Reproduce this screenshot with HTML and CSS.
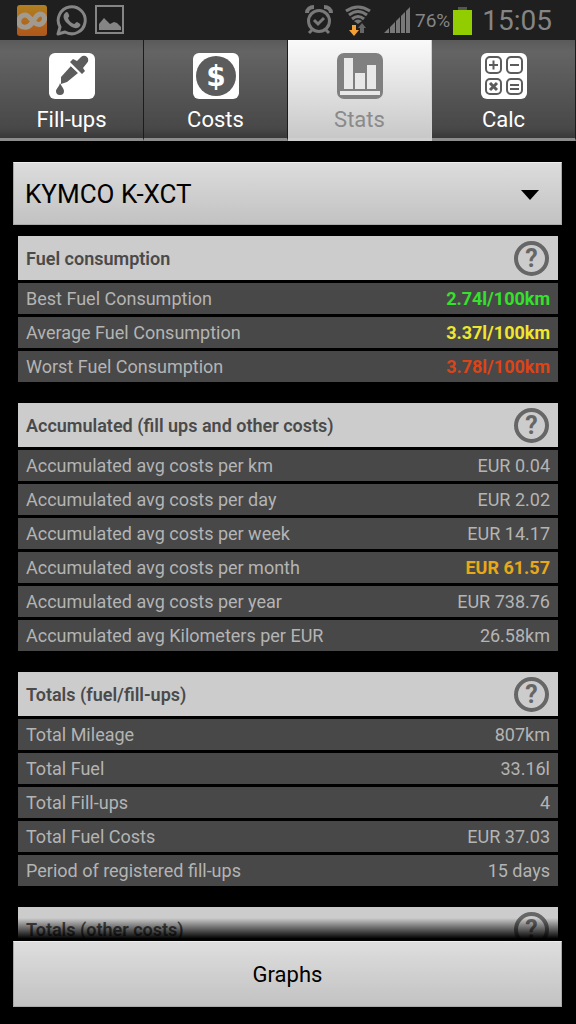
FILE: index.html
```html
<!DOCTYPE html>
<html lang="en">

<head>
    <meta charset="UTF-8">
    <meta name="viewport" content="width=device-width, initial-scale=1.0">
    <title>Stats</title>
    <link rel="stylesheet" href="styles.css">
</head>

<body>
    <!-- status bar -->
    <div class="status">
        <div class="notices">
            <svg width="30" height="31" viewBox="0 0 30 31">
                <defs>
                    <linearGradient id="orange" x1="0" y1="0" x2="0" y2="1">
                        <stop offset="0" stop-color="#b08020" />
                        <stop offset="1" stop-color="#b0561c" />
                    </linearGradient>
                </defs>
                <rect width="30" height="31" rx="3" fill="url(#orange)" />
                <path d="M2 18c1 5 9 6 13 0 4-7 7-11 11-8 4 4-1 11-6 9-5-1-7-9-12-9-4 0-7 4-6 8z" fill="none" stroke="#a09a90" stroke-width="5" />
            </svg>
            <svg width="32" height="33" viewBox="0 0 32 33">
                <path d="M3 30l2-7A13.500 13.500 0 1 1 10 28z" fill="none" stroke="#858585" stroke-width="3" stroke-linejoin="round" />
                <path d="M10 9c2-2 3-1 4 2 1 2-1 2-1 3 1 3 3 5 6 6 1 0 2-2 3-2 4 2 4 3 3 4-3 4-8 2-12-2-4-3-6-8-3-11z" fill="#858585" />
            </svg>
            <svg width="30" height="30" viewBox="0 0 30 30">
                <rect x="1" y="1" width="27" height="27" fill="none" stroke="#858585" stroke-width="2" />
                <path d="M4 25v-6l5-6 6 6 4-2 3 1 4 4v3z" fill="#858585" />
            </svg>
        </div>
        <div class="system">
            <svg width="28" height="30" viewBox="0 0 28 30" fill="none" stroke="#787878" stroke-width="3">
                <circle cx="14" cy="16" r="10.500" />
                <path d="M9 15l4 4 6-6M7 25l-3 3M21 25l3 3" />
                <path d="M2 8c0-4 3-6 7-6M26 8c0-4-3-6-7-6" stroke-width="4" />
            </svg>
            <svg class="wifi" width="28" height="31" viewBox="0 0 28 31">
                <g fill="none" stroke="#787878" stroke-width="3">
                    <path d="M2 6q12-8 24 0M5 10q9-7 18 0M8 14q6-5 12 0" />
                </g>
                <path d="M10 16q4-3 8 0l-4 3z" fill="#787878" />
                <path d="M8 20h4v5h3l-5 6-5-6h3z" fill="#f5a032" />
                <path d="M16 28v-5h-2l4-5 4 5h-2v5z" fill="#666" />
            </svg>
            <svg class="signal" width="26" height="26" viewBox="0 0 26 26" fill="#787878">
                <path d="M0 26l5-5v5zM6 26v-6l5-5v11zM12 26v-12l4-4v16zM17 26v-17l4-4v21zM22 26v-22l4-4v26z" />
            </svg>
            <span class="percent">76%</span>
            <svg class="battery" width="19" height="29" viewBox="0 0 19 29">
                <path d="M5 1h9v3h-9z" fill="#555" />
                <path d="M0 4h19v25h-19z" fill="#91cd00" />
            </svg>
            <span class="clock">15:05</span>
        </div>
    </div>

    <!-- tabs -->
    <nav class="tabs">
        <a href="#fillups" class="tab">
            <svg width="46" height="46" viewBox="0 0 46 46">
                <rect width="46" height="46" rx="6" fill="#fff" />
                <g fill="#5c5c5c">
                    <path d="M21 9l3-3 4 2 4-4a4 4 0 0 1 6 6l-4 5 2 3-3 3z" />
                    <path d="M22 13l7 7-11 9-6 2v-7z" />
                    <path d="M11 30c2 4 4 6 4 8a4 4 0 0 1-8 0c0-2 3-4 4-8z" />
                </g>
                <path d="M20 11l12 11" stroke="#fff" stroke-width="1" />
            </svg>
            <span>Fill-ups</span>
        </a>
        <a href="#costs" class="tab">
            <svg width="46" height="46" viewBox="0 0 46 46">
                <rect width="46" height="46" rx="6" fill="#fff" />
                <circle cx="23" cy="23" r="20" fill="#5c5c5c" />
                <text class="dollar" x="23" y="33" text-anchor="middle">$</text>
            </svg>
            <span>Costs</span>
        </a>
        <a href="#stats" class="tab active">
            <svg width="46" height="46" viewBox="0 0 46 46">
                <rect width="46" height="46" rx="7" fill="#808080" />
                <path d="M7 5h9v31h-9zM18 20h10v16h-10zM30 12h9v24h-9zM3 38h40v4h-40z" fill="#e8e8e8" />
            </svg>
            <span>Stats</span>
        </a>
        <a href="#calc" class="tab">
            <svg width="46" height="46" viewBox="0 0 46 46">
                <rect width="46" height="46" rx="6" fill="#fff" />
                <g fill="none" stroke="#5c5c5c" stroke-width="2">
                    <rect x="5" y="4" width="15" height="16" rx="4" />
                    <rect x="26" y="4" width="15" height="16" rx="4" />
                    <rect x="5" y="26" width="15" height="15" rx="4" />
                    <rect x="26" y="26" width="15" height="15" rx="4" />
                    <path d="M8 12h9M12.500 7.500v9M29 12h9M29 32h9M29 36h9" />
                    <path d="M9 30l7 7M16 30l-7 7" stroke-width="3" />
                </g>
            </svg>
            <span>Calc</span>
        </a>
    </nav>

    <main>
        <div class="vehicle">
            <select aria-label="Vehicle">
                <option>KYMCO K-XCT</option>
            </select>
            <svg width="18" height="10" viewBox="0 0 18 10">
                <path d="M0 0h18l-9 10z" />
            </svg>
        </div>

        <section>
            <div class="head">
                <h2>Fuel consumption</h2>
                <button class="help">?</button>
            </div>
            <table>
                <tr><th>Best Fuel Consumption</th><td class="best">2.74l/100km</td></tr>
                <tr><th>Average Fuel Consumption</th><td class="average">3.37l/100km</td></tr>
                <tr><th>Worst Fuel Consumption</th><td class="worst">3.78l/100km</td></tr>
            </table>
        </section>

        <section>
            <div class="head">
                <h2>Accumulated (fill ups and other costs)</h2>
                <button class="help">?</button>
            </div>
            <table>
                <tr><th>Accumulated avg costs per km</th><td>EUR 0.04</td></tr>
                <tr><th>Accumulated avg costs per day</th><td>EUR 2.02</td></tr>
                <tr><th>Accumulated avg costs per week</th><td>EUR 14.17</td></tr>
                <tr><th>Accumulated avg costs per month</th><td class="month">EUR 61.57</td></tr>
                <tr><th>Accumulated avg costs per year</th><td>EUR 738.76</td></tr>
                <tr><th>Accumulated avg Kilometers per EUR</th><td>26.58km</td></tr>
            </table>
        </section>

        <section>
            <div class="head">
                <h2>Totals (fuel/fill-ups)</h2>
                <button class="help">?</button>
            </div>
            <table>
                <tr><th>Total Mileage</th><td>807km</td></tr>
                <tr><th>Total Fuel</th><td>33.16l</td></tr>
                <tr><th>Total Fill-ups</th><td>4</td></tr>
                <tr><th>Total Fuel Costs</th><td>EUR 37.03</td></tr>
                <tr><th>Period of registered fill-ups</th><td>15 days</td></tr>
            </table>
        </section>

        <section>
            <div class="head">
                <h2>Totals (other costs)</h2>
                <button class="help">?</button>
            </div>
        </section>
    </main>

    <footer>
        <button class="graphs">Graphs</button>
    </footer>
</body>

</html>
```

FILE: styles.css
```css
* {
    box-sizing: border-box;
}

body {
    display: flex;
    flex-direction: column;
    height: 100vh;
    margin: 0;
    background: #000;
    font-family: Roboto, sans-serif;
}

svg {
    display: block;
    flex: none;
}

/* status bar */
.status {
    display: flex;
    justify-content: space-between;
    flex: none;
    height: 40px;
    padding: 0 24px 0 17px;
    background: #1f1f1f;
    color: #858585;
}

.notices,
.system {
    display: flex;
    align-items: center;
}

.notices {
    gap: 8px;
}

.wifi {
    margin-left: 11px;
}

.signal {
    margin-left: 12px;
}

.percent {
    margin-left: 5px;
    font-size: 19px;
}

.battery {
    margin: 0 10px 0 3px;
}

.clock {
    font-size: 28px;
}

/* tabs */
.tabs {
    display: flex;
    flex: none;
}

.tab {
    display: flex;
    flex: 1;
    flex-direction: column;
    align-items: center;
    height: 101px;
    padding-top: 13px;
    border-right: 1px solid #1c1c1c;
    border-bottom: 3px solid #8c8c8c;
    background: linear-gradient(#5a5a5a, #646464 12%, #484848 90%, #383838);
    color: #fff;
    font-size: 22px;
    line-height: 28px;
    text-decoration: none;
}

.tab span {
    margin-top: 7px;
}

.tab.active {
    border-color: #d0d0d0;
    background: linear-gradient(#fafafa, #c8c8c8);
    color: #8a8a8a;
}

.dollar {
    fill: #fff;
    font: bold 28px "DejaVu Sans", sans-serif;
}

/* content */
main {
    flex: 1;
    min-height: 0;
    padding: 21px 14px 0 13px;
    overflow-y: auto;
    scrollbar-width: none;
}

.vehicle {
    position: relative;
    margin-bottom: 11px;
}

.vehicle select {
    width: 100%;
    height: 63px;
    padding: 0 11px;
    border: 1px solid #a8a8a8;
    border-top-color: #eee;
    border-radius: 0;
    background: linear-gradient(#dcdcdc, #c2c2c2);
    appearance: none;
    color: #000;
    font: 26px Roboto, sans-serif;
}

.vehicle svg {
    position: absolute;
    top: 28px;
    right: 23px;
    pointer-events: none;
}

section {
    margin: 0 4px 18px 5px;
}

.head {
    display: flex;
    align-items: center;
    justify-content: space-between;
    height: 44px;
    padding: 0 9px 0 8px;
    background: #ccc;
}

h2 {
    margin: 0;
    color: #4a4a4a;
    font-size: 18px;
    font-weight: 600;
}

.help {
    width: 35px;
    height: 35px;
    padding: 0;
    border: 4px solid #666;
    border-radius: 50%;
    background: none;
    color: #666;
    font: bold 25px/27px Roboto, sans-serif;
}

table {
    width: 100%;
    border-spacing: 0 3px;
}

th,
td {
    height: 31px;
    padding: 0 8px;
    background: #484848;
    color: #b4b4b4;
    font-size: 18px;
    font-weight: normal;
    line-height: 31px;
}

th {
    text-align: left;
}

td {
    text-align: right;
}

.best,
.average,
.worst,
.month {
    font-weight: bold;
}

.best {
    color: #36e02c;
}

.average {
    color: #f0e62e;
}

.worst {
    color: #dc4418;
}

.month {
    color: #e8a818;
}

/* bottom button, the list fades out above it */
footer {
    position: relative;
    flex: none;
    padding: 0 14px 17px 13px;
}

footer::before {
    content: "";
    position: absolute;
    right: 0;
    bottom: 100%;
    left: 0;
    height: 23px;
    background: linear-gradient(transparent, #000 90%);
    pointer-events: none;
}

.graphs {
    display: block;
    width: 100%;
    height: 66px;
    border: 1px solid #a8a8a8;
    border-top-color: #eee;
    background: linear-gradient(#dedede, #c2c2c2);
    color: #000;
    font: 22px Roboto, sans-serif;
}
```
